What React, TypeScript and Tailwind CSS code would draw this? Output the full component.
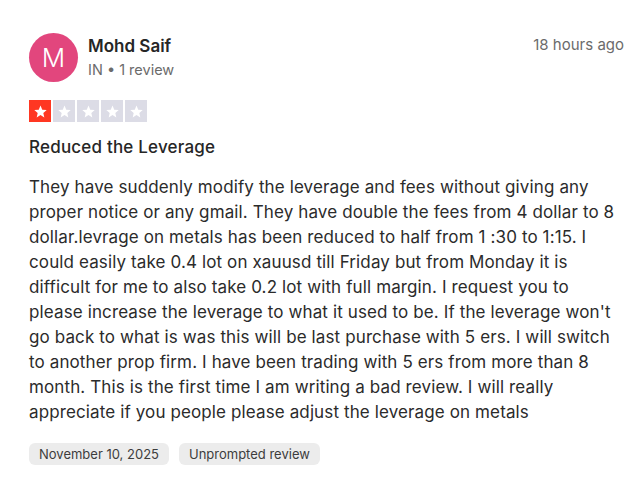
import React from "react";

// lines broken as in the screenshot so the wrap matches
const LINES = [
  "They have suddenly modify the leverage and fees without giving any",
  "proper notice or any gmail. They have double the fees from 4 dollar to 8",
  "dollar.levrage on metals has been reduced to half from 1 :30 to 1:15. I",
  "could easily take 0.4 lot on xauusd till Friday but from Monday it is",
  "difficult for me to also take 0.2 lot with full margin. I request you to",
  "please increase the leverage to what it used to be. If the leverage won't",
  "go back to what is was this will be last purchase with 5 ers. I will switch",
  "to another prop firm. I have been trading with 5 ers from more than 8",
  "month. This is the first time I am writing a bad review. I will really",
  "appreciate if you people please adjust the leverage on metals",
];

function Star({ on }: { on: boolean }) {
  return (
    <div className={`flex h-[22px] w-[22px] items-center justify-center ${on ? "bg-[#ff3722]" : "bg-[#dcdce6]"}`}>
      <svg viewBox="0 0 24 24" className="h-[15px] w-[15px]" fill="#ffffff">
        <path d="M12 2.5l2.8 6.6 7.1.6-5.4 4.7 1.6 7-6.1-3.7-6.1 3.7 1.6-7L2.1 9.7l7.1-.6z" />
      </svg>
    </div>
  );
}

export default function App() {
  return (
    <div className="min-h-screen bg-white px-[29px] pt-[33px] font-['Inter',sans-serif] text-[#1c1c1c]">
      <div className="flex items-start">
        <div className="flex h-[49px] w-[49px] items-center justify-center rounded-full bg-[#e2467d] text-[26px] font-light text-white">
          M
        </div>
        <div className="ml-[10px] mt-[2px] flex-1">
          <p className="text-[17px] font-semibold leading-[22px] text-[#262626]">Mohd Saif</p>
          <p className="mt-[3px] text-[14.5px] leading-[20px] text-[#6b6b6b]">IN • 1 review</p>
        </div>
        <p className="-mr-[16px] mt-[1px] text-[15px] text-[#6b6b6b]">18 hours ago</p>
      </div>

      <div className="mt-[18px] flex gap-[2px]">
        {[0, 1, 2, 3, 4].map((i) => (
          <Star key={i} on={i === 0} />
        ))}
      </div>

      <h2 className="mt-[14px] text-[17px] font-medium leading-[22px] tracking-[0.2px] text-[#262626]">
        Reduced the Leverage
      </h2>

      <div className="mt-[17px] text-[17px] leading-[25px] tracking-[0.12px] text-[#2b2b2b]">
        {LINES.map((l) => (
          <p key={l} className="whitespace-nowrap">
            {l}
          </p>
        ))}
      </div>

      <div className="mt-[18px] flex gap-[10px] text-[13px] leading-[18px] text-[#3d3d3d]">
        <span className="rounded-[6px] bg-[#ececec] px-[10px] py-[2px]">November 10, 2025</span>
        <span className="rounded-[6px] bg-[#ececec] px-[10px] py-[2px]">Unprompted review</span>
      </div>
    </div>
  );
}
